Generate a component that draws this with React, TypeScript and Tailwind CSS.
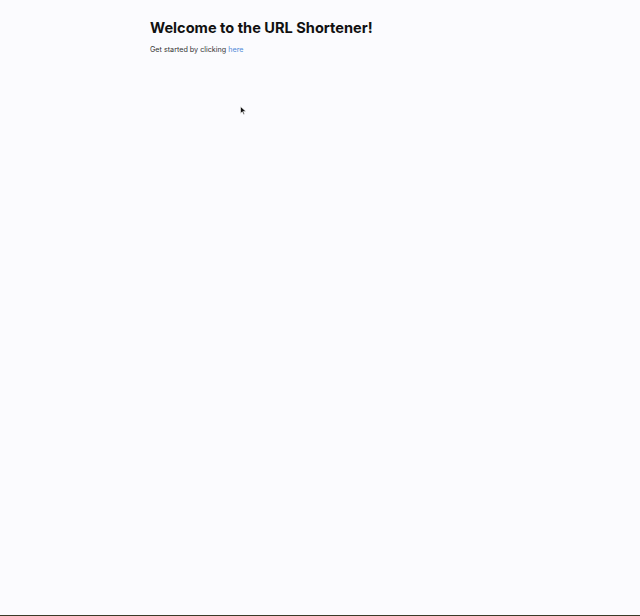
import React from "react";

const Cursor = () => (
  <svg
    className="absolute left-[240px] top-[106px]"
    width="7"
    height="9"
    viewBox="0 0 7 9"
  >
    <path d="M0.5 0.5 L0.5 7.5 L2.3 5.8 L3.6 8.5 L4.6 8 L3.4 5.4 L6 5.4 Z" fill="#111" stroke="#fff" strokeWidth="0.6" />
  </svg>
);

const App = () => {
  return (
    <div className="relative h-[616px] w-full bg-[#fbfbfe] font-['Inter','Noto_Sans',sans-serif] border-b border-[#3a3a28] overflow-hidden">
      <main className="mx-auto w-[340px] pt-[19px]">
        <h1 className="text-[14.6px] leading-[18px] font-bold text-[#111111]">
          Welcome to the URL Shortener!
        </h1>
        <p className="mt-[9px] text-[7.2px] leading-[8px] text-[#333333]">
          Get started by clicking{" "}
          <a href="#" className="text-[#4f8ad8]">
            here
          </a>
        </p>
      </main>
      <Cursor />
    </div>
  );
};

export default App;
